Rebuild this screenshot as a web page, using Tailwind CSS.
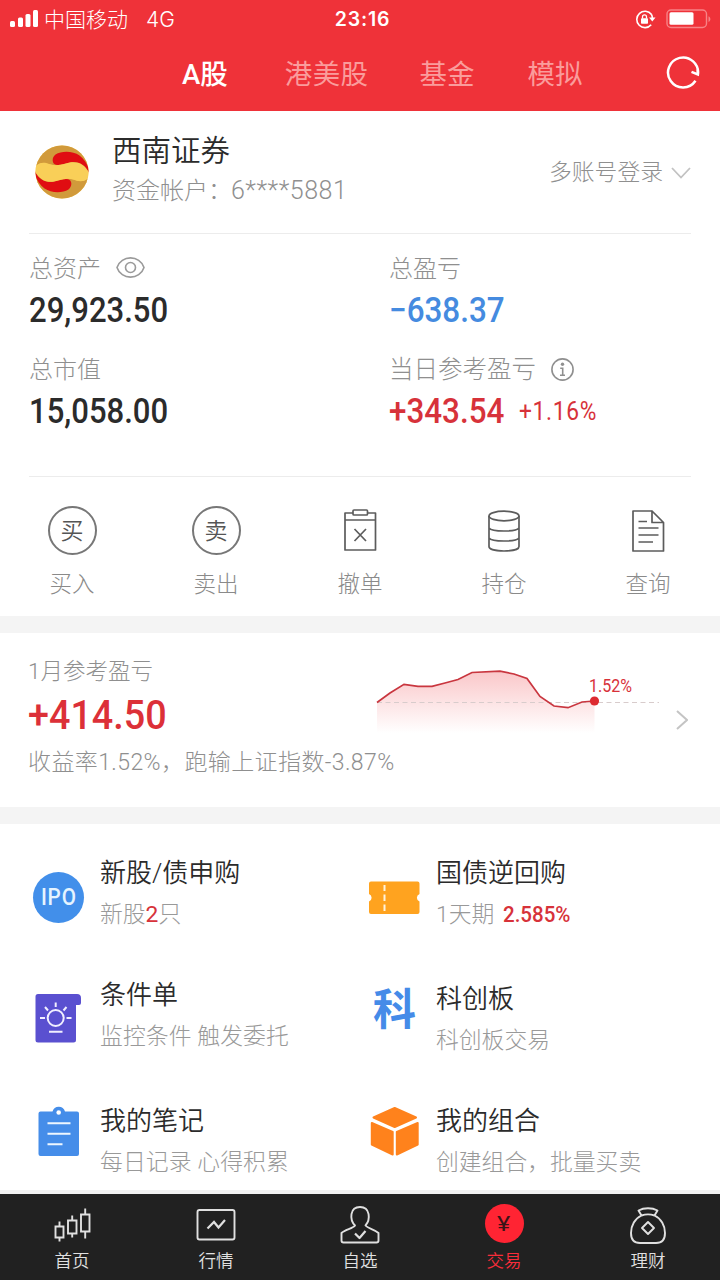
<!DOCTYPE html>
<html lang="zh-CN">
  <head>
    <meta charset="UTF-8" />
    <meta name="viewport" content="width=device-width, initial-scale=1.0" />
    <title>交易 - A股</title>
    <script src="https://cdn.jsdelivr.net/npm/@tailwindcss/browser@4"></script>
  </head>
  <body class="w-[720px] h-[1280px] flex flex-col overflow-hidden bg-white text-[#2b2b2b] font-light font-['Roboto','Noto_Sans_CJK_SC',sans-serif] whitespace-nowrap">
    <!-- Header -->
    <header class="h-[111px] shrink-0 bg-[#ef3239] text-white">
      <div class="h-[37px] grid grid-cols-3 items-center">
        <div class="flex items-center pl-[10px]">
          <svg class="w-[29px] h-[18px]" viewBox="0 0 29 18" fill="currentColor">
            <rect x="0" y="11" width="5" height="6" rx="1.500" />
            <rect x="8" y="7.500" width="5" height="9.500" rx="1.500" />
            <rect x="15.500" y="4" width="5" height="13" rx="1.500" />
            <rect x="23" y="0" width="5" height="17" rx="1.500" />
          </svg>
          <span class="ml-[5px] pt-[2px] text-[21px] leading-[35px]">中国移动</span>
          <span class="ml-[18px] text-[21px] leading-[37px] font-light font-['Inter']">4G</span>
        </div>
        <div class="text-center text-[19.5px] leading-[37px] font-semibold font-['Inter'] tracking-[0.8px] pl-[5px] pt-px">23:16</div>
        <div class="flex items-center justify-end pr-[9px] gap-[10px]">
          <svg class="w-[21px] h-[19px]" viewBox="0 0 21 19" fill="none" stroke="currentColor" stroke-width="1.600">
            <path d="M16.500 4.500A8.200 8.200 0 1 0 16.200 14.800" />
            <path d="M14 7.500h6.500L17.300 11.500z" fill="currentColor" stroke="none" />
            <path d="M16.300 4.200q1 1.500 1.100 4" />
            <rect x="6" y="8.300" width="7" height="5.500" rx="0.800" fill="currentColor" stroke="none" />
            <path d="M7.500 8.500V6.800a2 2 0 0 1 4 0v1.700" stroke-width="1.300" />
          </svg>
          <svg class="w-[45px] h-[20px]" viewBox="0 0 45 20">
            <rect x="1" y="1" width="39.500" height="17.500" rx="4" fill="none" stroke="#f78386" stroke-width="1.400" />
            <rect x="3.500" y="3.300" width="24" height="12.500" rx="1.500" fill="white" />
            <path d="M42.500 7.200c2.500 1 2.500 4.800 0 5.800z" fill="#f78386" />
          </svg>
        </div>
      </div>
      <nav class="h-[74px] flex items-center text-[27.5px] text-[#fa9c9c] font-normal pr-[20px] pt-[2px]">
        <a href="#" class="ml-[182px] text-white font-medium">A股</a>
        <a href="#" class="ml-[57px] tracking-[0.4px]">港美股</a>
        <a href="#" class="ml-[51px]">基金</a>
        <a href="#" class="ml-[53px]">模拟</a>
        <svg class="ml-auto mb-[4px] w-[34px] h-[34px] text-white" viewBox="0 0 34 34" fill="none" stroke="currentColor" stroke-width="2.500">
          <path d="M29.500 24.800A15 15 0 1 1 31.900 18.500L25.500 15.800" />
          <path d="M31.800 13.500v5" />
        </svg>
      </nav>
    </header>

    <!-- Account -->
    <section class="h-[123px] shrink-0 mx-[29px] border-b border-[#ececec] flex items-center">
      <svg class="ml-[6px] w-[54px] h-[54px]" viewBox="0 0 54 54">
        <defs>
          <clipPath id="coin"><circle cx="27" cy="27" r="26.500" /></clipPath>
          <g id="swirl">
            <path d="M0 22C4 16.500 10 17.500 15 19.500C19 20.700 22 20.500 25 20L54 26V0H0Z" fill="#d19a3b" />
            <path d="M55 30C51 20 44 16 36 17.300C30 18.500 26 20.300 22 20C16.500 19.500 16.500 12.500 20.500 9.500C27 5.500 38 6 44.500 10.500C50 14.500 54 21 55 30Z" fill="#e00d12" />
          </g>
        </defs>
        <g clip-path="url(#coin)">
          <rect width="54" height="54" fill="#f9cf58" />
          <use href="#swirl" />
          <use href="#swirl" transform="rotate(180 27 27)" />
          <path d="M-1 24C4 16 10 17.500 15 19.300C24 22 30 18 36 17.300C44 16.500 51 20 55 30C50 38 44 36.500 39 34.700C30 32 24 36 18 36.700C10 37.500 3 34 -1 24Z" fill="#f9cf58" />
        </g>
      </svg>
      <div class="ml-[23px] mb-[2px]">
        <h1 class="text-[29.5px] leading-[40px] font-[350]">西南证券</h1>
        <p class="text-[24px] leading-[40px] text-[#8f8f8f]">资金帐户：<span class="-ml-px tracking-[0.5px] text-[25px]">6****5881</span></p>
      </div>
      <a href="#" class="ml-auto flex items-center pt-[2px] text-[22.800px] text-[#8f8f8f]">
        多账号登录
        <svg class="ml-[8px] w-[20px] h-[12px]" viewBox="0 0 20 12" fill="none" stroke="#c2c2c2" stroke-width="1.800"><path d="M1 1l9 9.500L19 1" /></svg>
      </a>
    </section>

    <!-- Totals -->
    <section class="h-[243px] shrink-0 mx-[29px] pt-[15px] border-b border-[#ececec] grid grid-cols-[360px_1fr] grid-rows-[101px_101px]">
      <div>
        <div class="flex items-center text-[24px] leading-[40px] text-[#8f8f8f]">
          总资产
          <svg class="ml-[15px] mb-[3px] w-[29px] h-[21px]" viewBox="0 0 29 21" fill="none" stroke="#9a9a9a" stroke-width="1.600">
            <path d="M1 10.500C5 -2.300 24 -2.300 28 10.500C24 23.300 5 23.300 1 10.500Z" />
            <circle cx="14.500" cy="10.500" r="5" />
          </svg>
        </div>
        <p class="text-[34.5px] leading-[43px] font-medium origin-left scale-x-[.9]">29,923.50</p>
      </div>
      <div>
        <div class="text-[24px] leading-[40px] text-[#8f8f8f]">总盈亏</div>
        <p class="text-[34.5px] leading-[43px] font-medium origin-left scale-x-[.91] text-[#458be0]">−638.37</p>
      </div>
      <div>
        <div class="text-[24px] leading-[40px] text-[#8f8f8f]">总市值</div>
        <p class="text-[34.5px] leading-[43px] font-medium origin-left scale-x-[.9]">15,058.00</p>
      </div>
      <div>
        <div class="flex items-center text-[24.500px] leading-[40px] text-[#8f8f8f]">
          当日参考盈亏
          <svg class="ml-[15px] mb-[2px] w-[23px] h-[23px]" viewBox="0 0 23 23" fill="none" stroke="#8f8f8f" stroke-width="1.600">
            <circle cx="11.500" cy="11.500" r="10.600" />
            <circle cx="11.500" cy="6.300" r="1.700" fill="#8f8f8f" stroke="none" />
            <path d="M9.200 10.300h2.500v6.700M9 17.200h5" />
          </svg>
        </div>
        <p class="flex items-center leading-[43px] font-medium origin-left scale-x-[.91] text-[#d7323a]">
          <span class="text-[34.5px]">+343.54</span>
          <span class="ml-[16px] text-[25px] tracking-[0.8px] font-normal">+1.16%</span>
        </p>
      </div>
    </section>

    <!-- Trade actions -->
    <section class="h-[139px] shrink-0 pt-[28px] grid grid-cols-5 text-center text-[22.500px] text-[#8a8a8a]">
      <a href="#" class="flex flex-col items-center">
        <span class="w-[49px] h-[49px] my-px rounded-full border-2 border-[#777] pt-[3px] flex items-center justify-center text-[23px] text-[#555] font-[350]">买</span>
        <span class="mt-[8px] leading-[40px]">买入</span>
      </a>
      <a href="#" class="flex flex-col items-center">
        <span class="w-[49px] h-[49px] my-px rounded-full border-2 border-[#777] pt-[3px] flex items-center justify-center text-[23px] text-[#555] font-[350]">卖</span>
        <span class="mt-[8px] leading-[40px]">卖出</span>
      </a>
      <a href="#" class="flex flex-col items-center">
        <svg class="w-[51px] h-[51px]" viewBox="0.500 -0.500 51 51" fill="none" stroke="#5c5c5c" stroke-width="1.700" stroke-linejoin="round">
          <path d="M18.500 7.500H10.500V44.500H41V7.500H33M10.500 14.500H41" />
          <rect x="18.500" y="4.500" width="14.500" height="5" rx="1" />
          <path d="M20 23.500l11.500 12M31.500 23.500L20 35.500" />
        </svg>
        <span class="mt-[8px] leading-[40px]">撤单</span>
      </a>
      <a href="#" class="flex flex-col items-center">
        <svg class="w-[51px] h-[51px]" viewBox="0.500 -0.500 51 51" fill="none" stroke="#5c5c5c" stroke-width="1.700">
          <ellipse cx="25.500" cy="10.500" rx="15" ry="4.800" />
          <path d="M10.500 10.500V41c0 6 30 6 30 0V10.500M10.500 22.500c3 4 27 4 30 0M10.500 32.500c3 4 27 4 30 0" />
        </svg>
        <span class="mt-[8px] leading-[40px]">持仓</span>
      </a>
      <a href="#" class="flex flex-col items-center">
        <svg class="w-[51px] h-[51px]" viewBox="0.500 -0.500 51 51" fill="none" stroke="#5c5c5c" stroke-width="1.700" stroke-linejoin="round">
          <path d="M29.500 5.500H10.500V45.500H41V17L29.500 5.500V17H41M16 16h8.500M16 22.500h20M16 29.500h20M16 36.500h14.500" />
        </svg>
        <span class="mt-[8px] leading-[40px]">查询</span>
      </a>
    </section>

    <div class="h-[17px] shrink-0 bg-[#f4f4f4]"></div>

    <!-- Monthly profit -->
    <section class="h-[174px] shrink-0 pl-[28px] pr-[32px] flex">
      <div class="w-[342px] pt-[18px]">
        <h2 class="text-[22.5px] leading-[40px] text-[#8f8f8f]">1月参考盈亏</h2>
        <p class="text-[41px] leading-[49px] font-medium origin-left scale-x-[.92] text-[#dc3038]">+414.50</p>
        <p class="pt-px text-[23px] leading-[44px] tracking-[0.4px] text-[#8f8f8f]">收益率1.52%，跑输上证指数-3.87%</p>
      </div>
      <svg class="mt-[27px] w-[295px] h-[80px]" viewBox="370 660 295 80">
        <defs>
          <linearGradient id="fade" x1="0" y1="670" x2="0" y2="733" gradientUnits="userSpaceOnUse">
            <stop offset="0" stop-color="#fac6c8" />
            <stop offset="1" stop-color="#fff" />
          </linearGradient>
        </defs>
        <path d="M377 702.500L390 693L404 684.300L418 686.300H432L445 683L458 679.500L472 672.500L500 671.200L514 674L527 678.500L540 696.500L554 706L568 707.700L582 702L594.500 701V733H377Z" fill="url(#fade)" />
        <path d="M377 702.500H659" stroke="#d8cccc" stroke-width="1" stroke-dasharray="5 3.500" />
        <path d="M377 702.500L390 693L404 684.300L418 686.300H432L445 683L458 679.500L472 672.500L500 671.200L514 674L527 678.500L540 696.500L554 706L568 707.700L582 702L594.500 701" fill="none" stroke="#c9363f" stroke-width="1.700" />
        <circle cx="594.500" cy="701" r="4.600" fill="#dd2a30" />
        <text x="589" y="692" class="text-[17.5px] font-normal" textLength="43" lengthAdjust="spacingAndGlyphs" fill="#d8323a">1.52%</text>
      </svg>
      <svg class="ml-auto mt-[77px] w-[12px] h-[20px]" viewBox="0 0 12 20" fill="none" stroke="#c4c4c4" stroke-width="2"><path d="M1 1l10 9L1 19" /></svg>
    </section>

    <div class="h-[17px] shrink-0 bg-[#f4f4f4]"></div>

    <!-- Services -->
    <section class="h-[366px] shrink-0 pt-[28px] pl-[33px] grid grid-cols-[336px_1fr]">
      <div>
        <a href="#" class="flex items-center">
          <span class="w-[51px] h-[51px] mt-[6px] rounded-full bg-[#428fea] flex items-center justify-center text-[#e6f4ff]"><span class="text-[24px] font-medium tracking-[1px] scale-x-[.86]">IPO</span></span>
          <div class="ml-[16px]">
            <h3 class="text-[26px] leading-[42px] font-[350]">新股/债申购</h3>
            <p class="text-[22.8px] leading-[42px] text-[#999]">新股<span class="text-[#d7323a] font-normal">2</span>只</p>
          </div>
        </a>
        <a href="#" class="mt-[38px] flex items-center">
          <svg class="w-[51px] h-[51px] mt-[4px]" viewBox="0 0 51 51">
            <path d="M5 1H44q4 0 4 4v5q0 2-2 2H43V47q0 2.500-2.500 2.500H5Q2.500 49.500 2.500 47V3.500Q2.500 1 5 1Z" fill="#5a50d0" />
            <g fill="none" stroke="#f1efff" stroke-width="2">
              <circle cx="22.700" cy="25" r="8" />
              <path d="M22.700 14v-4.500M30.500 17.500l3-3.500M15 17.500l-3-3.500M33.500 25h5M12 25H7M16 38.700h13.500" />
            </g>
          </svg>
          <div class="ml-[16px]">
            <h3 class="text-[26px] leading-[42px] font-[350]">条件单</h3>
            <p class="text-[22.8px] leading-[42px] text-[#999] tracking-[0.1px]">监控条件 触发委托</p>
          </div>
        </a>
        <a href="#" class="mt-[42px] flex items-center">
          <svg class="w-[51px] h-[51px] mb-[23px]" viewBox="0 0 51 51">
            <path d="M7.500 6.500H19.500a6.500 6.500 0 0 1 12.500 0H44q2 0 2 2V49q0 2-2 2H7.500q-2 0-2-2V8.500q0-2 2-2Z" fill="#458de9" />
            <circle cx="25.700" cy="7.500" r="2.300" fill="#fff" />
            <path d="M14.500 18.300h23M14.500 28.700h23M14.500 39.300h15" stroke="#eef7ff" stroke-width="2" />
          </svg>
          <div class="ml-[16px]">
            <h3 class="text-[26px] leading-[42px] font-[350]">我的笔记</h3>
            <p class="text-[22.8px] leading-[42px] text-[#999] tracking-[0.1px]">每日记录 心得积累</p>
          </div>
        </a>
      </div>
      <div>
        <a href="#" class="flex items-center">
          <svg class="w-[51px] h-[51px] mt-[6px]" viewBox="0 0 51 51">
            <path d="M2 9.500H48.500q2 0 2 2V22a4 4 0 0 0 0 7.500V40q0 2-2 2H2q-2 0-2-2V29.500a4 4 0 0 0 0-7.500V11.500q0-2 2-2Z" fill="#ffa31f" />
            <path d="M15.500 13v6M15.500 22.500v6.500M15.500 32.500v6.500" stroke="#fff3dc" stroke-width="2" />
          </svg>
          <div class="ml-[16px]">
            <h3 class="text-[26px] leading-[42px] font-[350]">国债逆回购</h3>
            <p class="text-[22.8px] leading-[42px] text-[#999]">1天期<span class="ml-[9px] inline-block origin-left scale-x-[.9] text-[#d7323a] font-medium">2.585%</span></p>
          </div>
        </a>
        <a href="#" class="mt-[42px] flex items-center">
          <span class="w-[51px] h-[51px] mb-[20px] flex items-center justify-center text-[43px] leading-[51px] font-bold text-[#458be8]">科</span>
          <div class="ml-[16px]">
            <h3 class="text-[26px] leading-[42px] font-[350]">科创板</h3>
            <p class="text-[22.8px] leading-[42px] text-[#999]">科创板交易</p>
          </div>
        </a>
        <a href="#" class="mt-[38px] flex items-center">
          <svg class="w-[51px] h-[51px] mb-[22px]" viewBox="0 0 51 51" fill="#ff821c" stroke="#ff821c" stroke-width="2" stroke-linejoin="round">
            <path d="M25.700 2L47 11.500L25.700 21L4.500 11.500Z" />
            <path d="M2.800 17L23.700 26V48.500L2.800 38.500Z" />
            <path d="M48.700 17L27.800 26V48.500L48.700 38.500Z" />
          </svg>
          <div class="ml-[16px]">
            <h3 class="text-[26px] leading-[42px] font-[350]">我的组合</h3>
            <p class="text-[22.8px] leading-[42px] text-[#999]">创建组合，批量买卖</p>
          </div>
        </a>
      </div>
    </section>

    <!-- Tab bar -->
    <footer class="h-[90px] shrink-0 border-t-4 border-[#f1f1f1] bg-[#212121] pt-[9px] grid grid-cols-5 text-[17.5px] leading-[28px] text-[#e0e0e0] font-[350]">
      <a href="#" class="flex flex-col items-center">
        <svg class="w-[42px] h-[42px]" viewBox="0 0 42 42" fill="none" stroke="currentColor" stroke-width="1.900">
          <path d="M4.500 23.500h8v11h-8zM8.500 18.500v5M8.500 34.500v4M17 17.500h8.500v13H17zM21.200 12.500v5M21.200 30.500v4M30 11.500h8.500v17H30zM34.200 5.500v6M34.200 28.500v7" />
        </svg>
        <span class="mt-[2px]">首页</span>
      </a>
      <a href="#" class="flex flex-col items-center">
        <svg class="w-[42px] h-[42px]" viewBox="0 0 42 42" fill="none" stroke="currentColor" stroke-width="1.900">
          <rect x="2.500" y="7" width="37" height="29.500" rx="2" />
          <path d="M12.500 25.500l6.500-6.500 4.500 5.500 6.500-7.500" stroke-width="2.200" />
        </svg>
        <span class="mt-[2px]">行情</span>
      </a>
      <a href="#" class="flex flex-col items-center">
        <svg class="w-[42px] h-[42px]" viewBox="0 0 42 42" fill="none" stroke="currentColor" stroke-width="1.900" stroke-linejoin="round">
          <path d="M16 22.500C10.500 17 10.500 4 21 4S31.500 17 26.500 22.500C29 25.500 36 26.500 39.500 30V37.500q0 2-2 2H4.500q-2 0-2-2V30C6 26.500 14 25.500 16 22.500Z" />
          <path d="M16 30.500l4.500 4.500 6-7" stroke-width="2.200" />
        </svg>
        <span class="mt-[2px]">自选</span>
      </a>
      <a href="#" class="flex flex-col items-center text-[#f92d3a]">
        <span class="w-[39px] h-[39px] mt-px mb-[2px] rounded-full bg-[#ff2433] flex items-center justify-center text-[#3a1417]"><span class="text-[21px] font-normal scale-x-[1.2]">¥</span></span>
        <span class="mt-[2px]">交易</span>
      </a>
      <a href="#" class="flex flex-col items-center">
        <svg class="w-[42px] h-[42px]" viewBox="0 0 42 42" fill="none" stroke="currentColor" stroke-width="1.900" stroke-linejoin="round">
          <path d="M14.500 12.500L11.500 7.500C17 4.500 25 4.500 30.500 7.500L27.500 12.500M14.500 12.500C19 11 23 11 27.500 12.500C34 15.500 38 22.500 38 30Q38 40 29 40H13Q4 40 4 30C4 22.500 8 15.500 14.500 12.500Z" />
          <path d="M21 19l6 6-6 6-6-6z" />
        </svg>
        <span class="mt-[2px]">理财</span>
      </a>
    </footer>
  </body>
</html>
